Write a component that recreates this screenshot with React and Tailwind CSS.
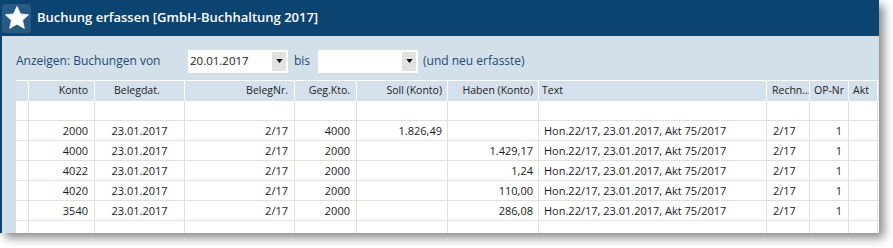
import { ChevronDown } from 'lucide-react'

const cols = [
  { key: 'sel', w: 'w-[13px]', head: '', align: '' },
  { key: 'konto', w: 'w-[66px]', head: 'Konto', align: 'text-right pr-[6px]' },
  { key: 'datum', w: 'w-[90px]', head: 'Belegdat.', align: 'text-center' },
  { key: 'beleg', w: 'w-[110px]', head: 'BelegNr.', align: 'text-right pr-[6px]' },
  { key: 'geg', w: 'w-[62px]', head: 'Geg.Kto.', align: 'text-right pr-[6px]' },
  { key: 'soll', w: 'w-[91px]', head: 'Soll (Konto)', align: 'text-right pr-[5px]' },
  { key: 'haben', w: 'w-[91px]', head: 'Haben (Konto)', align: 'text-right pr-[5px]' },
  { key: 'text', w: 'w-[228px]', head: 'Text', align: 'text-left pl-[5px]' },
  { key: 'rechn', w: 'w-[43px]', head: 'Rechn...', align: 'text-left pl-[6px]' },
  { key: 'op', w: 'w-[39px]', head: 'OP-Nr', align: 'text-right pr-[6px]' },
  { key: 'akt', w: 'w-[29px]', head: 'Akt', align: 'text-left pl-[4px]' },
]

const headAlign = {
  sel: '',
  konto: 'text-right pr-[6px]',
  datum: 'text-left pl-[19px]',
  beleg: 'text-right pr-[6px]',
  geg: 'text-right pr-[6px]',
  soll: 'text-right pr-[5px]',
  haben: 'text-right pr-[5px]',
  text: 'text-left pl-[3px]',
  rechn: 'text-left pl-[5px]',
  op: 'text-left pl-[4px]',
  akt: 'text-left pl-[4px]',
}

const text = 'Hon.22/17, 23.01.2017, Akt 75/2017'

const rows = [
  {},
  { konto: '2000', datum: '23.01.2017', beleg: '2/17', geg: '4000', soll: '1.826,49', haben: '', text, rechn: '2/17', op: '1' },
  { konto: '4000', datum: '23.01.2017', beleg: '2/17', geg: '2000', soll: '', haben: '1.429,17', text, rechn: '2/17', op: '1' },
  { konto: '4022', datum: '23.01.2017', beleg: '2/17', geg: '2000', soll: '', haben: '1,24', text, rechn: '2/17', op: '1' },
  { konto: '4020', datum: '23.01.2017', beleg: '2/17', geg: '2000', soll: '', haben: '110,00', text, rechn: '2/17', op: '1' },
  { konto: '3540', datum: '23.01.2017', beleg: '2/17', geg: '2000', soll: '', haben: '286,08', text, rechn: '2/17', op: '1' },
  {},
]

function Star() {
  return (
    <svg viewBox="0 0 24 24" className="h-[26px] w-[26px]">
      <path
        d="M12 1.2l3.3 7 7.5.8-5.6 5.1 1.6 7.5L12 17.8l-6.8 3.8 1.6-7.5-5.6-5.1 7.5-.8z"
        fill="#ffffff"
        stroke="#ffffff"
        strokeWidth="0.6"
        strokeLinejoin="round"
      />
    </svg>
  )
}

function DateBox({ value, width }) {
  return (
    <div className={`flex h-[23px] ${width} items-center bg-white`}>
      <span className="flex-1 pl-[2px] text-[11.5px] text-[#222]">{value}</span>
      <span className="mr-[2px] flex h-[19px] w-[14px] items-center justify-center bg-[#e1e1e1]">
        <svg viewBox="0 0 8 5" className="h-[4px] w-[7px]">
          <path d="M0 0h8L4 5z" fill="#111" />
        </svg>
      </span>
    </div>
  )
}

export default function App() {
  return (
    <div className="h-[248px] w-[893px] bg-white" style={{ fontFamily: '"Open Sans", "Liberation Sans", sans-serif' }}>
      <div className="h-[233px] w-[879px] overflow-hidden shadow-[5px_5px_9px_rgba(0,0,0,0.45)]">
        <div className="flex h-[36px] items-center bg-[#0b4471]">
          <div className="ml-[2px] flex h-[29px] w-[29px] items-center justify-center rounded-[3px] bg-[#275b83]">
            <Star />
          </div>
          <span className="ml-[6px] text-[13px] font-semibold text-white">
            Buchung erfassen [GmbH-Buchhaltung 2017]
          </span>
        </div>
        <div className="h-[197px] border-l-2 border-[#0b4471] bg-[#d3dfe9]">
          <div className="flex h-[44px] items-center pt-[6px] text-[12px] text-[#1c4a78]">
            <span className="ml-[14px] w-[172px]">Anzeigen: Buchungen von</span>
            <DateBox value="20.01.2017" width="w-[100px]" />
            <span className="ml-[6px] w-[24px]">bis</span>
            <DateBox value="" width="w-[100px]" />
            <span className="ml-[5px]">(und neu erfasste)</span>
          </div>
          <div className="ml-[14px] bg-white">
            <div className="flex h-[21px] border-t border-white bg-[#d4e0eb] text-[10.5px] text-[#222]">
              {cols.map((c) => (
                <div
                  key={c.key}
                  className={`${c.w} shrink-0 border-r border-white leading-[19px] whitespace-nowrap overflow-hidden ${headAlign[c.key]}`}
                >
                  {c.head}
                </div>
              ))}
            </div>
            {rows.map((r, i) => (
              <div key={i} className="flex h-[20px] border-b border-[#e3e0db] text-[11px] text-[#1a1a1a]">
                {cols.map((c) => (
                  <div
                    key={c.key}
                    className={`${c.w} shrink-0 border-r border-[#e3e0db] leading-[19px] whitespace-nowrap overflow-hidden ${c.align}`}
                  >
                    {r[c.key] || ''}
                  </div>
                ))}
              </div>
            ))}
          </div>
        </div>
      </div>
    </div>
  )
}
